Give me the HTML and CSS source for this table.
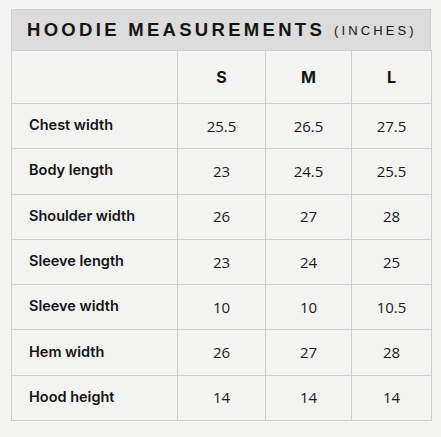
FILE: index.html
```html
<!DOCTYPE html>
<html>
<head>
<meta charset="utf-8">
<link rel="stylesheet" href="styles.css">
</head>
<body>
<div class="chart">
  <div class="title"><span class="main">HOODIE MEASUREMENTS</span> <span class="unit">(INCHES)</span></div>
  <table class="grid">
    <colgroup><col class="c0"><col class="c1"><col class="c2"><col class="c3"></colgroup>
    <thead>
      <tr class="head"><th></th><th>S</th><th>M</th><th>L</th></tr>
    </thead>
    <tbody>
      <tr><th>Chest width</th><td>25.5</td><td>26.5</td><td>27.5</td></tr>
      <tr><th>Body length</th><td>23</td><td>24.5</td><td>25.5</td></tr>
      <tr><th>Shoulder width</th><td>26</td><td>27</td><td>28</td></tr>
      <tr><th>Sleeve length</th><td>23</td><td>24</td><td>25</td></tr>
      <tr><th>Sleeve width</th><td>10</td><td>10</td><td>10.5</td></tr>
      <tr><th>Hem width</th><td>26</td><td>27</td><td>28</td></tr>
      <tr><th>Hood height</th><td>14</td><td>14</td><td>14</td></tr>
    </tbody>
  </table>
</div>
</body>
</html>
```
FILE: styles.css
```css
html, body {
  margin: 0;
  padding: 0;
  background: #f3f3f2;
}
body {
  padding: 9px 11px 0 11px;
}
.chart {
  width: 420px;
}
.title {
  height: 41px;
  background: #dcdcdc;
  border: 1px solid #d0d0d0;
  border-bottom: none;
  box-sizing: border-box;
  display: flex;
  align-items: center;
  padding-left: 15px;
  font-family: "Liberation Sans", Arial, sans-serif;
  color: #141414;
  white-space: nowrap;
}
.title .main {
  font-weight: bold;
  font-size: 18.5px;
  letter-spacing: 3.3px;
}
.title .unit {
  font-size: 13px;
  letter-spacing: 3.1px;
  margin-left: 9px;
  font-weight: 500;
}
.grid {
  width: 420px;
  border-collapse: collapse;
  table-layout: fixed;
}
.c0 { width: 166px; }
.c1 { width: 88px; }
.c2 { width: 86px; }
.c3 { width: 80px; }
.grid th, .grid td {
  border: 1px solid #cfcfd0;
  height: 45.3px;
  padding: 0;
  box-sizing: border-box;
}
.grid tr.head th {
  height: 53px;
  font-family: Inter, "Noto Sans", sans-serif;
  font-weight: 700;
  font-size: 16px;
  color: #141414;
  text-align: center;
}
.grid tbody th {
  text-align: left;
  padding: 0 0 3px 17px;
  font-family: Inter, "Noto Sans", sans-serif;
  font-weight: 600;
  font-size: 14.5px;
  color: #141414;
}
.grid td {
  text-align: center;
  padding-bottom: 1px;
  font-family: "Open Sans", "Noto Sans", sans-serif;
  font-size: 15px;
  color: #1a1a1a;
}
```
